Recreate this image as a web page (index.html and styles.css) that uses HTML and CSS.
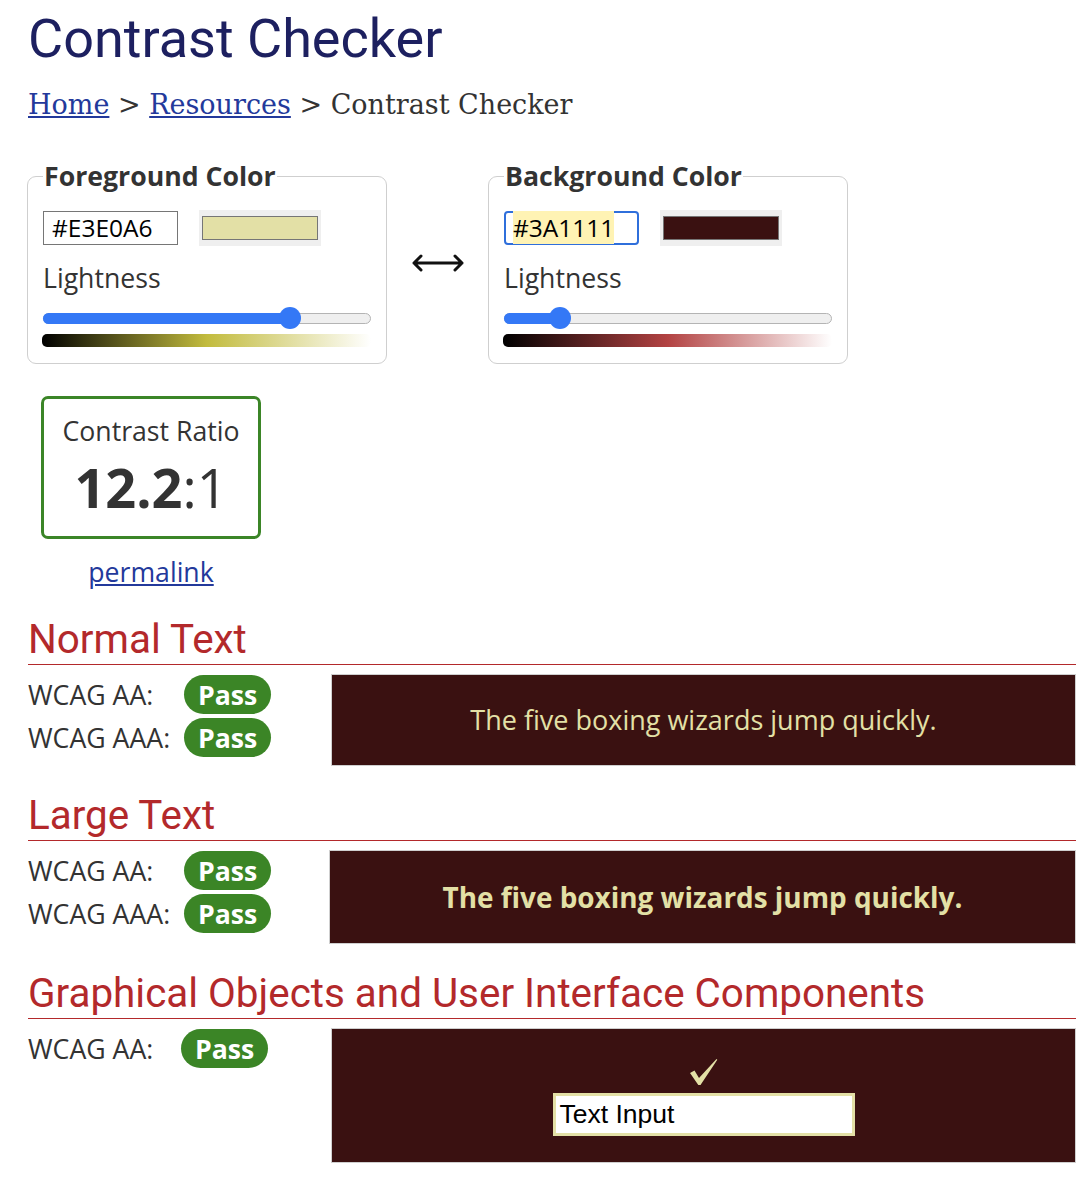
FILE: index.html
```html
<!DOCTYPE html>
<html lang="en">
<head>
<meta charset="utf-8">
<title>Contrast Checker</title>
<link rel="stylesheet" href="styles.css">
</head>
<body>
<main class="page">
  <h1 class="title">Contrast Checker</h1>
  <nav class="crumbs"><a href="#">Home</a> &gt; <a href="#">Resources</a> &gt; Contrast Checker</nav>

  <div class="pickers">
    <fieldset class="picker">
      <legend>Foreground Color</legend>
      <div class="hex-row">
        <div class="hex">#E3E0A6</div>
        <div class="swatch"><span class="swatch-fill swatch-fg"></span></div>
      </div>
      <div class="label">Lightness</div>
      <div class="slider">
        <div class="track"></div>
        <div class="fill" style="--v:0.77"></div>
        <span class="thumb" style="--v:0.77"></span>
      </div>
      <div class="grad grad-fg"></div>
    </fieldset>

    <div class="swap" aria-label="swap colors">
      <svg width="52" height="18" viewBox="0 0 52 18"><path d="M2 9 H50 M9 2 L2 9 L9 16 M43 2 L50 9 L43 16" fill="none" stroke="#111" stroke-width="3" stroke-linecap="round" stroke-linejoin="round"/></svg>
    </div>

    <fieldset class="picker">
      <legend>Background Color</legend>
      <div class="hex-row">
        <div class="hex hex-focus"><span class="sel">#3A1111</span></div>
        <div class="swatch"><span class="swatch-fill swatch-bg"></span></div>
      </div>
      <div class="label">Lightness</div>
      <div class="slider">
        <div class="track"></div>
        <div class="fill" style="--v:0.147"></div>
        <span class="thumb" style="--v:0.147"></span>
      </div>
      <div class="grad grad-bg"></div>
    </fieldset>
  </div>

  <div class="ratio">
    <div class="ratio-label">Contrast Ratio</div>
    <div class="ratio-value"><b>12.2</b>:1</div>
  </div>
  <div class="permalink-row"><a href="#" class="permalink">permalink</a></div>

  <section class="result">
    <h2 class="result-title">Normal Text</h2>
    <div class="result-body">
      <div class="checks">
        <div class="check"><span class="level">WCAG AA:</span><span class="pass">Pass</span></div>
        <div class="check"><span class="level">WCAG AAA:</span><span class="pass">Pass</span></div>
      </div>
      <div class="sample sample-normal">The five boxing wizards jump quickly.</div>
    </div>
  </section>

  <section class="result">
    <h2 class="result-title">Large Text</h2>
    <div class="result-body">
      <div class="checks checks-large">
        <div class="check"><span class="level">WCAG AA:</span><span class="pass">Pass</span></div>
        <div class="check"><span class="level">WCAG AAA:</span><span class="pass">Pass</span></div>
      </div>
      <div class="sample sample-large">The five boxing wizards jump quickly.</div>
    </div>
  </section>

  <section class="result">
    <h2 class="result-title">Graphical Objects and User Interface Components</h2>
    <div class="result-body">
      <div class="checks checks-ui">
        <div class="check"><span class="level level-ui">WCAG AA:</span><span class="pass">Pass</span></div>
      </div>
      <div class="sample sample-ui">
        <svg class="tick" width="30" height="28" viewBox="0 0 30 28"><path d="M1 15 L5.5 12.5 L10 20 L27.5 1 L28.3 1.8 L11.5 27 L9.3 27 Z" fill="#E3E0A6"/></svg>
        <div class="text-input">Text Input</div>
      </div>
    </div>
  </section>
</main>
</body>
</html>
```

FILE: styles.css
```css
* { box-sizing: border-box; }

html, body { margin: 0; padding: 0; background: #fff; }

.page {
  padding: 0 10px 40px 28px;
  font-family: "Open Sans", sans-serif;
  font-size: 26.67px;
  line-height: 36px;
  color: #333;
}

.title {
  margin: 6px 0 0;
  font-family: Roboto, sans-serif;
  font-weight: 400;
  font-size: 54px;
  line-height: 65px;
  color: #1d2060;
}

.crumbs {
  margin-top: 18px;
  font-family: "DejaVu Serif", serif;
  font-size: 27px;
  line-height: 31px;
  color: #333;
}
.crumbs a { color: #23399b; }

.pickers {
  display: flex;
  align-items: center;
  margin-top: 38px;
  margin-left: -1px;
}

.picker {
  width: 360px;
  margin: 0;
  padding: 16px 15px 16px;
  border: 1px solid #cfcfcf;
  border-radius: 9px;
  min-width: 0;
}
.picker legend {
  padding: 0 1px;
  font-weight: 700;
  font-size: 26.67px;
  line-height: 36px;
  color: #333;
}

.hex-row { display: flex; align-items: center; gap: 21px; }

.hex {
  width: 135px;
  height: 34px;
  padding: 0 8px;
  border: 1px solid #767676;
  font-size: 24.5px;
  line-height: 32px;
  color: #000;
  white-space: nowrap;
}
.hex-focus {
  border: 2px solid #2f6fdb;
  border-radius: 4px;
  padding: 0 7px;
  line-height: 30px;
}
.sel { background: #fff3b4; }

.swatch {
  width: 122px;
  height: 36px;
  padding: 6px 3px;
  background: #efefef;
}
.swatch-fill { display: block; height: 100%; border: 1px solid #767676; }
.swatch-fg { background: #E3E0A6; }
.swatch-bg { background: #3A1111; }

.label { margin-top: 14px; }

.slider {
  position: relative;
  height: 24px;
  margin-top: 10px;
}
.track {
  position: absolute;
  left: 0; right: 0; top: 6.5px;
  height: 11px;
  border-radius: 6px;
  background: #efefef;
  border: 1px solid #b4b4b4;
}
.fill {
  position: absolute;
  left: 0; top: 6.5px;
  height: 11px;
  width: calc(11px + (100% - 22px) * var(--v));
  border-radius: 6px;
  background: #3478f6;
}
.thumb {
  position: absolute;
  top: 1px;
  left: calc((100% - 22px) * var(--v));
  width: 22px;
  height: 22px;
  border-radius: 50%;
  background: #3478f6;
}

.grad {
  height: 13px;
  margin-top: 4px;
  margin-left: -1px;
  border-radius: 5px;
}
.grad-fg { background: linear-gradient(to right, #000, hsl(57, 52%, 50%) 50%, #fff); }
.grad-bg { background: linear-gradient(to right, #000, hsl(0, 46%, 48%) 50%, #fff); }

.swap {
  width: 101px;
  display: flex;
  justify-content: center;
  padding-top: 4px;
}

.ratio {
  width: 220px;
  margin: 32px 0 0 13px;
  padding: 14px 0 22px;
  border: 3px solid #3b8527;
  border-radius: 7px;
  text-align: center;
}
.ratio-value {
  margin-top: 11px;
  font-size: 54px;
  line-height: 54px;
  color: #333;
}
.ratio-value b { font-weight: 700; }

.permalink-row {
  width: 220px;
  margin: 15px 0 0 13px;
  text-align: center;
}
.permalink { color: #23399b; }

.result { margin-top: 26px; }
.result + .result { margin-top: 26px; }

.result-title {
  margin: 0;
  font-family: Roboto, sans-serif;
  font-weight: 400;
  font-size: 40.4px;
  line-height: 48px;
  color: #b3292b;
  border-bottom: 1px solid #b3292b;
}

.result-body {
  display: flex;
  margin-top: 9px;
}

.checks { width: 303px; display: flex; flex-direction: column; gap: 2px; }
.checks-large { width: 301px; }

.check { display: flex; align-items: center; height: 41px; }
.level { width: 156px; white-space: nowrap; }
.level-ui { width: 153px; }

.pass {
  display: inline-block;
  height: 39px;
  padding: 0 14px;
  border-radius: 20px;
  background: #3b8526;
  color: #fff;
  font-weight: 700;
  line-height: 39px;
}

.sample {
  flex: 1;
  display: flex;
  align-items: center;
  justify-content: center;
  background: #3A1111;
  color: #E3E0A6;
  border: 1px solid #cfcfcf;
}
.sample-normal { height: 92px; font-size: 27px; }
.sample-large { height: 94px; font-weight: 700; font-size: 27.9px; }
.sample-ui {
  height: 135px;
  flex-direction: column;
  justify-content: flex-start;
  padding-top: 29px;
  gap: 7px;
}
.tick { display: block; }

.text-input {
  width: 302px;
  height: 43px;
  border: 3px solid #E3E0A6;
  background: #fff;
  color: #000;
  font-family: "Liberation Sans", Arial, sans-serif;
  font-size: 26.5px;
  line-height: 37px;
  padding: 0 4px;
}
```
